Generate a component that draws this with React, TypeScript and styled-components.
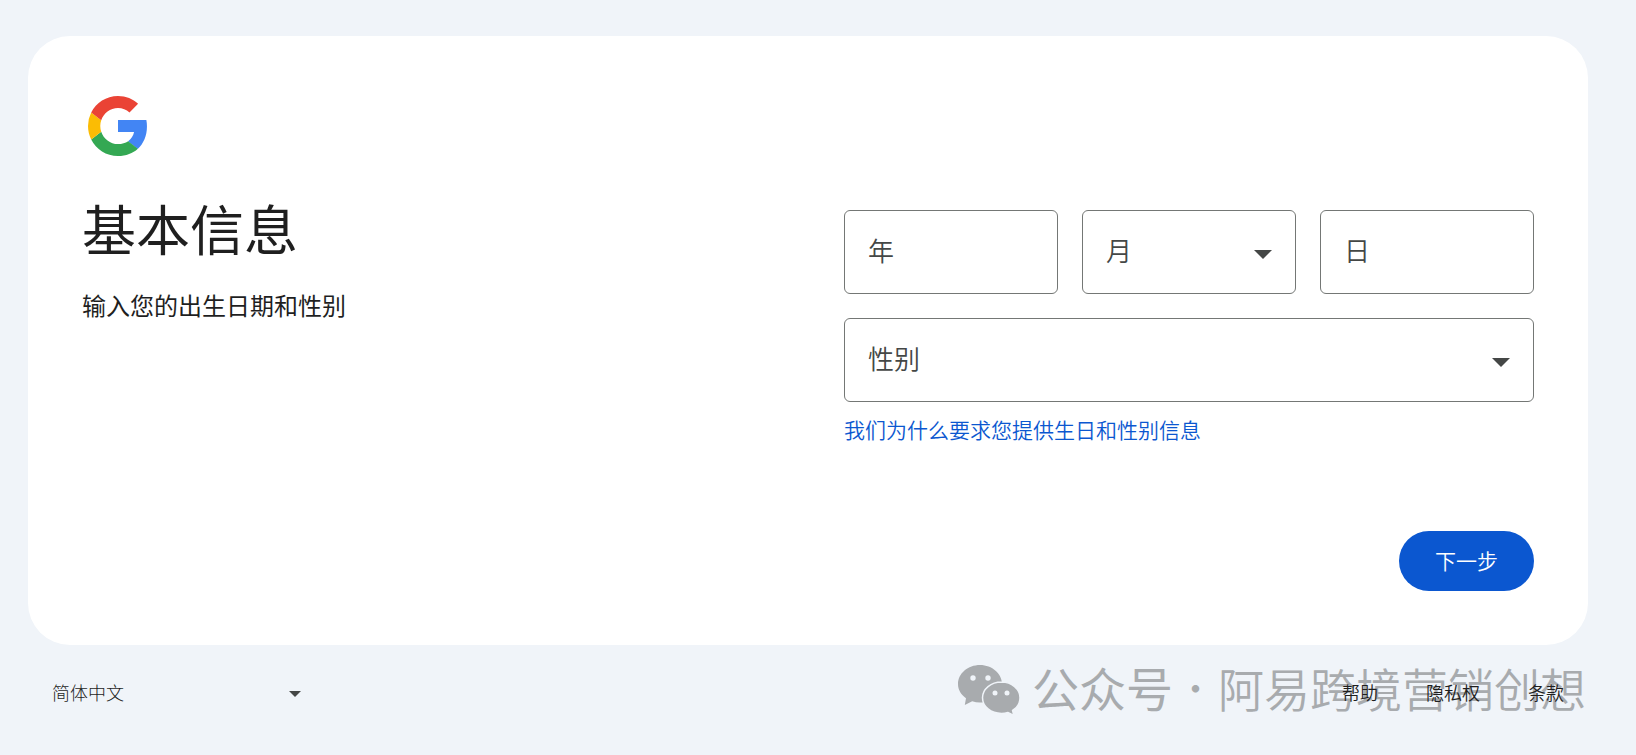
import React, { useState } from "react";
import styled, { createGlobalStyle } from "styled-components";

const GlobalStyle = createGlobalStyle`
  *, *::before, *::after { box-sizing: border-box; }
  body {
    margin: 0;
    background: #f0f4f9;
    color: #1f1f1f;
    font-family: "Noto Sans CJK SC", sans-serif;
    font-weight: 350;
  }
  input, select, button { font: inherit; color: inherit; }
`;

const Page = styled.div`
  display: flex;
  flex-direction: column;
  min-height: 100vh;
  padding: 36px 48px 0 28px;
`;

const Card = styled.main`
  background: #fff;
  border-radius: 42px;
  padding: 54px;
`;

const Columns = styled.div`
  display: grid;
  grid-template-columns: 1fr 1fr;
  column-gap: 72px;
`;

const Logo = styled.svg`
  display: block;
  width: 72px;
  height: 72px;
`;

const Title = styled.h1`
  margin: 33px 0 0;
  font-size: 54px;
  line-height: 66px;
  font-weight: 400;
`;

const Subtitle = styled.p`
  margin: 26px 0 0;
  font-size: 24px;
  line-height: 36px;
  font-weight: 400;
`;

const Form = styled.form`
  display: flex;
  flex-direction: column;
  padding-top: 120px;
`;

const Fields = styled.div`
  display: grid;
  grid-template-columns: repeat(3, 1fr);
  gap: 24px;
`;

const FieldBox = styled.div<{ $wide?: boolean }>`
  display: grid;
  grid-template-columns: 1fr;
  align-items: center;
  height: 84px;
  grid-column: ${(p) => (p.$wide ? "1 / -1" : "auto")};
  > * { grid-area: 1 / 1; }
`;

const FieldLabel = styled.label`
  justify-self: start;
  padding-left: 24px;
  padding-bottom: 4px;
  font-size: 26px;
  line-height: 36px;
  color: #444746;
  pointer-events: none;
  z-index: 1;
`;

const TextInput = styled.input`
  width: 100%;
  height: 100%;
  min-width: 0;
  padding: 0 24px;
  border: 1px solid #747775;
  border-radius: 6px;
  background: #fff;
  font-size: 26px;
`;

const SelectInput = styled.select`
  appearance: none;
  width: 100%;
  height: 100%;
  min-width: 0;
  padding: 0 60px 0 24px;
  border: 1px solid #747775;
  border-radius: 6px;
  background: #fff;
  font-size: 26px;
`;

const Arrow = styled.svg<{ $size: number; $inset: number }>`
  justify-self: end;
  width: ${(p) => p.$size}px;
  height: ${(p) => p.$size / 2}px;
  margin-right: ${(p) => p.$inset}px;
  margin-top: 4px;
  fill: #444746;
  pointer-events: none;
  z-index: 1;
`;

const WhyLink = styled.a`
  align-self: flex-start;
  margin-top: 11px;
  font-size: 21px;
  line-height: 32px;
  color: #0b57d0;
  text-decoration: none;
`;

const NextButton = styled.button`
  align-self: flex-end;
  height: 60px;
  margin-top: 86px;
  padding: 0 36px 2px;
  border: 0;
  border-radius: 30px;
  background: #0b57d0;
  color: #fff;
  font-size: 21px;
  cursor: pointer;
`;

const Footer = styled.footer`
  position: relative;
  display: flex;
  align-items: center;
  justify-content: space-between;
  height: 94px;
  padding: 0 24px;
`;

const LanguageBox = styled.div`
  display: grid;
  align-items: center;
  width: 262px;
  > * { grid-area: 1 / 1; }
`;

const LanguageSelect = styled.select`
  appearance: none;
  width: 100%;
  height: 48px;
  padding: 0;
  border: 0;
  background: transparent;
  font-size: 18px;
  font-weight: 300;
`;

const FooterLinks = styled.nav`
  display: flex;
  gap: 48px;
  z-index: 1;
`;

const FooterLink = styled.a`
  font-size: 18px;
  line-height: 24px;
  color: #1f1f1f;
  text-decoration: none;
`;

const Watermark = styled.div`
  position: absolute;
  right: 2px;
  top: 9px;
  display: flex;
  align-items: center;
  height: 66px;
  color: #a8abae;
  font-size: 46px;
  line-height: 66px;
  white-space: nowrap;
  pointer-events: none;
`;

const WatermarkIcon = styled.svg`
  width: 62px;
  height: 50px;
  margin-top: 5px;
  margin-right: 12px;
`;

const WatermarkSource = styled.span`
  font-size: 47px;
  font-weight: 400;
`;

const WatermarkDot = styled.span`
  width: 45px;
  font-size: 36px;
  text-align: center;
`;

function DropArrow({ size, inset }: { size: number; inset: number }) {
  return (
    <Arrow $size={size} $inset={inset} viewBox="0 0 18 9" aria-hidden="true">
      <path d="M0 0h18L9 9z" />
    </Arrow>
  );
}

function TextField({ id, label }: { id: string; label: string }) {
  const [value, setValue] = useState("");
  return (
    <FieldBox>
      <TextInput id={id} inputMode="numeric" value={value} onChange={(e) => setValue(e.target.value)} />
      <FieldLabel htmlFor={id} hidden={value !== ""}>{label}</FieldLabel>
    </FieldBox>
  );
}

function SelectField({ id, label, options, wide }: { id: string; label: string; options: string[]; wide?: boolean }) {
  const [value, setValue] = useState("");
  return (
    <FieldBox $wide={wide}>
      <SelectInput id={id} value={value} onChange={(e) => setValue(e.target.value)}>
        <option value="" />
        {options.map((o) => <option key={o}>{o}</option>)}
      </SelectInput>
      <FieldLabel htmlFor={id} hidden={value !== ""}>{label}</FieldLabel>
      <DropArrow size={18} inset={24} />
    </FieldBox>
  );
}

export default function App() {
  return (
    <Page>
      <GlobalStyle />
      <Card>
        <Columns>
          <div>
            <Logo viewBox="0 0 48 48" role="img" aria-label="Google">
              <path fill="#4285F4" d="M43.3 24.3c0-1.5-.1-2.9-.4-4.3H24v8h10.7c-.5 2.4-1.8 4.6-3.9 6.1v.2l6.2 4.9h.3c3.7-3.6 6-8.7 6-14.9z" />
              <path fill="#34A853" d="M24 44c5.4 0 9.93-1.79 13.24-4.85l-6.47-5.02c-1.79 1.2-4.08 1.91-6.77 1.91-5.21 0-9.62-3.52-11.19-8.25L6.13 32.97C9.42 39.51 16.17 44 24 44z" />
              <path fill="#FBBC04" d="M12.81 27.79A12 12 0 0 1 12.18 24c0-1.31.23-2.59.63-3.79l-6.68-5.18A20 20 0 0 0 4 24c0 3.23.77 6.28 2.13 8.97z" />
              <path fill="#EA4335" d="M24 11.96c2.94 0 5.57 1.01 7.65 2.99l5.74-5.74C33.92 5.98 29.39 4 24 4 16.17 4 9.42 8.49 6.13 15.03l6.68 5.18c1.57-4.73 5.98-8.25 11.19-8.25z" />
            </Logo>
            <Title>基本信息</Title>
            <Subtitle>输入您的出生日期和性别</Subtitle>
          </div>
          <Form onSubmit={(e) => e.preventDefault()}>
            <Fields>
              <TextField id="year" label="年" />
              <SelectField id="month" label="月" options={Array.from({ length: 12 }, (_, i) => `${i + 1}月`)} />
              <TextField id="day" label="日" />
              <SelectField id="gender" label="性别" options={["女", "男", "不愿透露", "自定义"]} wide />
            </Fields>
            <WhyLink href="#why">我们为什么要求您提供生日和性别信息</WhyLink>
            <NextButton type="submit">下一步</NextButton>
          </Form>
        </Columns>
      </Card>
      <Footer>
        <LanguageBox>
          <LanguageSelect aria-label="语言">
            <option>简体中文</option>
          </LanguageSelect>
          <DropArrow size={12} inset={13} />
        </LanguageBox>
        <Watermark>
          <WatermarkIcon viewBox="0 0 62 50" aria-hidden="true">
            <path fill="currentColor" d="M22 0C10 0 0 8.500 0 19c0 5.800 3 10.700 8 14.200l-1.200 6.800 7.400-3.700c2.500.8 5 1.200 7.800 1.200 12.200 0 22-8.300 22-18.500S34.200 0 22 0z" />
            <path fill="currentColor" stroke="#f0f4f9" strokeWidth="1.500" d="M43.500 17c-10.500 0-19 7-19 15.800s8.500 15.700 19 15.700c2.300 0 4.500-.4 6.500-1l5.800 3-1.200-5c4.700-3 7.400-7.500 7.400-12.700 0-8.800-8.300-15.800-18.500-15.800z" />
            <g fill="#f0f4f9">
              <circle cx="15" cy="13" r="2.700" />
              <circle cx="30" cy="13" r="2.700" />
              <circle cx="37" cy="28" r="2.500" />
              <circle cx="49" cy="28" r="2.500" />
            </g>
          </WatermarkIcon>
          <WatermarkSource>公众号</WatermarkSource>
          <WatermarkDot>·</WatermarkDot>
          <span>阿易跨境营销创想</span>
        </Watermark>
        <FooterLinks>
          <FooterLink href="#help">帮助</FooterLink>
          <FooterLink href="#privacy">隐私权</FooterLink>
          <FooterLink href="#terms">条款</FooterLink>
        </FooterLinks>
      </Footer>
    </Page>
  );
}
